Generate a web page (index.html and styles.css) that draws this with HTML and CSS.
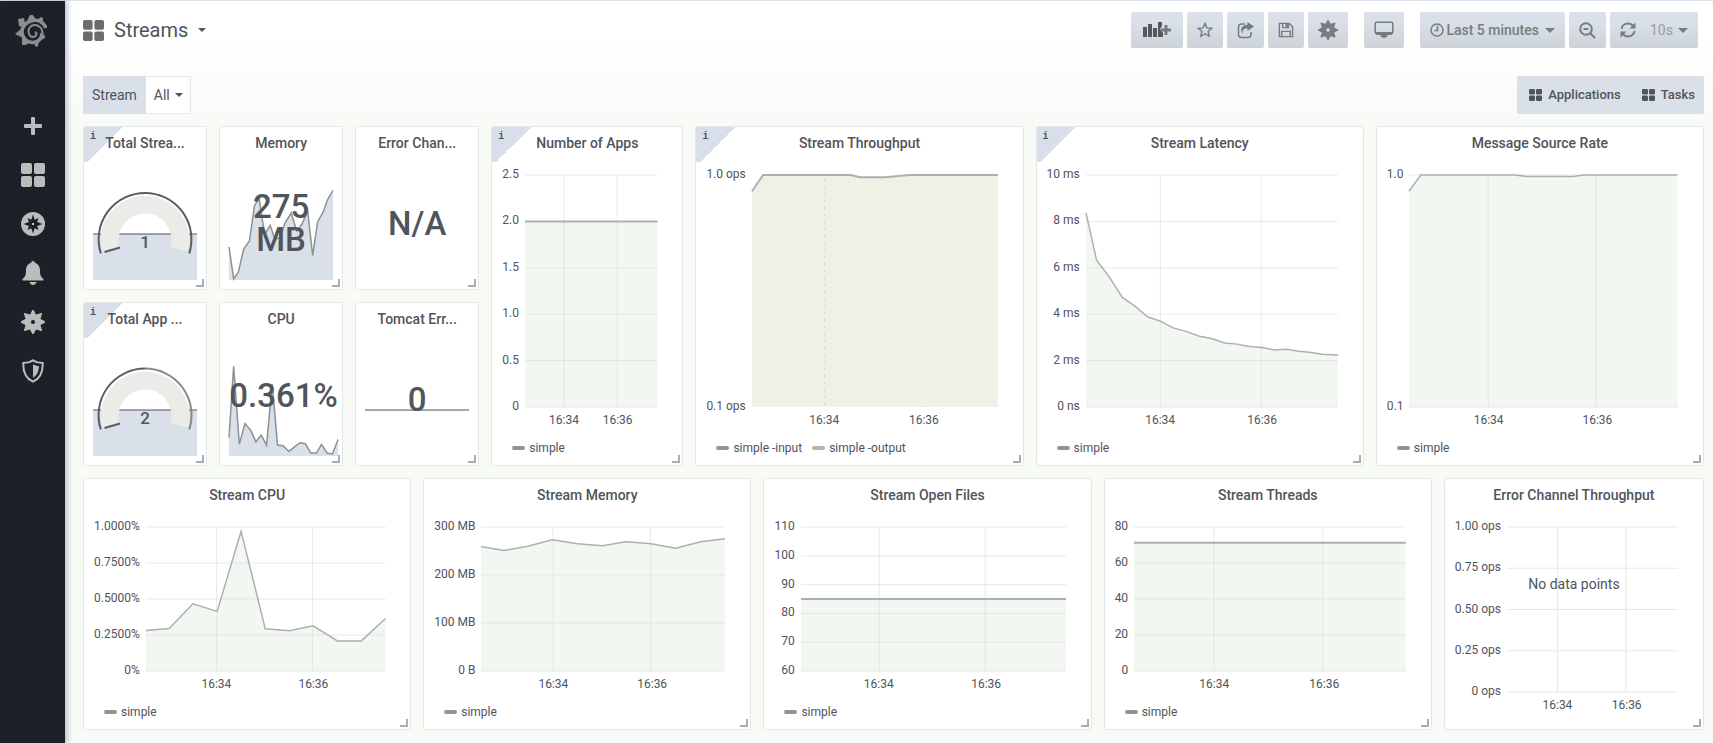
FILE: index.html
```html
<!DOCTYPE html>
<html lang="en">
<head>
<meta charset="utf-8">
<title>Streams</title>
<link rel="stylesheet" href="styles.css">
</head>
<body>
<svg class="defs" width="0" height="0" aria-hidden="true">
  <symbol id="i-grid" viewBox="0 0 24 24"><rect width="11" height="11" rx="2"/><rect x="13" width="11" height="11" rx="2"/><rect y="13" width="11" height="11" rx="2"/><rect x="13" y="13" width="11" height="11" rx="2"/></symbol>
  <symbol id="i-gear" viewBox="0 0 24 24"><path fill-rule="evenodd" d="M12 0l2.400 4.700 1 .4L20.500 3.500l-1.600 5.100.4 1L24 12l-4.700 2.400-.4 1 1.600 5.100-5.100-1.600-1 .4L12 24l-2.400-4.700-1-.4-5.100 1.600 1.600-5.100-.4-1L0 12l4.700-2.400.4-1L3.500 3.500l5.100 1.600 1-.4zM12 9.300a2.700 2.700 0 1 0 0 5.400 2.700 2.700 0 0 0 0-5.400z" stroke="currentColor" stroke-width="1.200" stroke-linejoin="round"/></symbol>
</svg>
<div class="app">
  <nav class="side" aria-label="Main">
    <a class="logo" href="#" aria-label="Home"><svg width="32" height="34" viewBox="0 0 32 34"><path d="M12 7l3-6h3l3 5zM3 5l6-1 1 5-4 4-2-1zM6 15l-6 5 6 3zM7 23v8h4l4-3zM18 28l3 5 2-1 1-6zM25 22l5-1v3l-4 2zM22 6l4-3 2 1v5z"/><path d="M31 14C29 8 23 5.500 18 6.500 11.500 7.500 7 12.500 7 18c0 6 5 10.500 11 10.500 5 0 9-4 9-9.500" fill="none" stroke="currentColor" stroke-width="3.500"/><path d="M27.500 19C27.500 14 24 11 19.500 11 16 11 13.500 14 13.500 17.500c0 3.500 2.500 6 5 5.500 3-.5 4-4 1.500-5" fill="none" stroke="currentColor" stroke-width="2"/></svg></a>
    <a href="#" aria-label="Create"><svg width="18" height="18" viewBox="0 0 18 18"><path d="M7 1q0-1 1-1h2q1 0 1 1v6h6q1 0 1 1v2q0 1-1 1h-6v6q0 1-1 1H8q-1 0-1-1v-6H1q-1 0-1-1V8q0-1 1-1h6z"/></svg></a>
    <a href="#" aria-label="Dashboards"><svg width="24" height="24"><use href="#i-grid"/></svg></a>
    <a href="#" aria-label="Explore"><svg width="24" height="24" viewBox="0 0 24 24"><circle cx="12" cy="12" r="12"/><path class="cut" d="M12 2.500l1.700 5.300 3.800-1.800-1.400 4 5.400 2-5.400 2 1.400 4-3.800-1.800L12 21.500l-1.700-5.300L6.500 18l1.400-4-5.400-2 5.400-2-1.400-4 3.800 1.800z"/><circle cx="12" cy="12" r="1.200"/></svg></a>
    <a href="#" aria-label="Alerting"><svg width="22" height="24" viewBox="0 0 22 24"><path d="M11 0c1.200 0 1.800.8 1.800 1.700C16.500 2.800 18 6 18 9.500c0 5 1 6.500 3.500 8.500v1.500H.5V18C3 16 4 14.500 4 9.500 4 6 5.500 2.800 9.200 1.700 9.200.8 9.800 0 11 0zM7.500 21h7c-.5 2-2 3-3.500 3s-3-1-3.500-3z"/></svg></a>
    <a href="#" aria-label="Configuration"><svg width="24" height="24"><use href="#i-gear"/></svg></a>
    <a href="#" aria-label="Server admin"><svg width="22" height="24" viewBox="0 0 22 24"><path d="M11 1.300c3 2 6 2.700 9.700 2.700C21 13 18 19.500 11 22.700 4 19.500 1 13 1.300 4 5 4 8 3.300 11 1.300z" fill="none" stroke="currentColor" stroke-width="2"/><path d="M11 5.200c2 1.200 3.800 1.700 6 1.900-.2 5.400-2 9.400-6 11.700z"/></svg></a>
  </nav>
  <main class="main">
    <header class="topbar">
      <button class="dash-title" type="button"><svg width="21" height="21"><use href="#i-grid"/></svg><span>Streams</span><i class="caret small"></i></button>
      <div class="tools">
        <div class="group">
          <button class="btn wide" type="button" aria-label="Add panel"><svg width="28" height="18" viewBox="0 0 28 18"><path class="dark" d="M0 6h4v10H0zM5 3h4v13H5zM10 7h4v9h-4zM15 1h4v4l-2 3 3 4v4h-5z"/><path d="M21.500 4h3v3.500H28v3h-3.500V14h-3v-3.500H18v-3h3.500z"/></svg></button>
          <button class="btn" type="button" aria-label="Mark as favorite"><svg width="16" height="16" viewBox="0 0 17 17"><path class="line" d="M8.500 1.500l2.100 4.700 5.100.5-3.900 3.400 1.200 5.100-4.500-2.700L4 15.200l1.200-5.100-3.900-3.400 5.100-.5z"/></svg></button>
          <button class="btn" type="button" aria-label="Share"><svg width="17" height="17" viewBox="0 0 17 17"><path class="line" d="M8 2H4.500Q1.500 2 1.500 5v7.500q0 3 3 3H11q3 0 3-3V10"/><path d="M10.500 0L17 4.500 10.500 9V6.500C7 6.300 5.500 8 5.500 12 2.500 7 5 2.800 10.500 2.700z"/></svg></button>
          <button class="btn" type="button" aria-label="Save"><svg width="16" height="16" viewBox="0 0 17 17"><path class="line" d="M1.500 1.500H12l3.500 3.500v10.500h-14zM4 15v-5h9v5M5 2v4h6V2"/><path d="M8 2h2.500v3.500H8z"/></svg></button>
          <button class="btn" type="button" aria-label="Settings"><svg width="20" height="20"><use href="#i-gear"/></svg></button>
        </div>
        <button class="btn" type="button" aria-label="Cycle view mode"><svg width="20" height="18" viewBox="0 0 20 18"><path class="line" d="M2.500 1.200h15q1.300 0 1.300 1.300v8.500q0 1.500-1.300 1.500h-15q-1.300 0-1.300-1.500V2.500q0-1.300 1.300-1.300z"/><path d="M1 11h18v1.500L17.500 14H13l.5 2H12l-2 1.500L8 16H6.500l.5-2H2.500L1 12.500z"/></svg></button>
        <div class="group">
          <button class="btn" type="button"><svg width="14" height="14" viewBox="0 0 14 14"><circle class="line" cx="7" cy="7" r="6"/><path class="line" d="M7.500 3v4.500H4.500"/></svg><span class="time">Last 5 minutes</span><i class="caret"></i></button>
          <button class="btn" type="button" aria-label="Zoom out"><svg width="17" height="17" viewBox="0 0 17 17"><circle class="line bold" cx="7" cy="7" r="5.800"/><path class="line bold" d="M11.300 11.300L16 16M4.500 7h5"/></svg></button>
          <div class="btn refresh">
            <button type="button" aria-label="Refresh"><svg width="16" height="16" viewBox="0 0 16 16"><path class="line bold" d="M1.500 7C2 3.500 5 1.500 8 1.500c2.200 0 4 1 5.200 2.600M14.500 9c-.5 3.500-3.500 5.500-6.500 5.500-2.200 0-4-1-5.200-2.600"/><path d="M15.500.5v6h-6zM.5 15.500v-6h6z"/></svg></button>
            <label class="pick"><select aria-label="Refresh interval"><option>10s</option></select><i class="caret"></i></label>
          </div>
        </div>
      </div>
    </header>
    <div class="submenu">
      <div class="variable"><label for="stream">Stream</label><span class="pick"><select id="stream"><option>All</option></select><i class="caret small"></i></span></div>
      <div class="links"><a href="#"><svg width="13" height="12" viewBox="0 0 24 24" preserveAspectRatio="none"><use href="#i-grid"/></svg>Applications</a><a href="#"><svg width="13" height="12" viewBox="0 0 24 24" preserveAspectRatio="none"><use href="#i-grid"/></svg>Tasks</a></div>
    </div>
    <div class="board">
      <section class="panel w2 h4 info"><h2>Total Strea...</h2>
        <div class="stat"><svg class="gauge" viewBox="0 0 104 90"><path class="area" d="M0 44h104v46H0z"/><path class="spark" d="M0 44h104"/><path class="band" d="M17.700 59.500A35.500 35.500 0 1 1 86.300 59.500"/><path class="hole" d="M27 44a25.500 25.500 0 0 1 50 0z"/><path class="spark" d="M27 44h50"/><path class="rim" d="M7.800 63.400A46.400 46.400 0 1 1 96.200 63.400M11.500 62L27 57.500"/><text x="52" y="58">1</text></svg></div></section>
      <section class="panel w2 h4"><h2>Memory</h2>
        <div class="stat"><svg viewBox="460 227 311 270" preserveAspectRatio="none"><path class="area" d="M460 398L474 494 488 473 504 404 521 380 536 275 550 250 557 300 567 360 583 333 597 375 612 370 628 325 646 296 662 350 678 330 695 290 710 423 725 322 740 296 755 255 771 228V497H460z"/><path class="spark" d="M460 398L474 494 488 473 504 404 521 380 536 275 550 250 557 300 567 360 583 333 597 375 612 370 628 325 646 296 662 350 678 330 695 290 710 423 725 322 740 296 755 255 771 228"/></svg><strong>275 MB</strong></div></section>
      <section class="panel w2 h4"><h2>Error Chan...</h2><div class="stat"><strong>N/A</strong></div></section>
      <section class="panel w3 h8 info"><h2>Number of Apps</h2>
        <div class="chart"><div class="y"><span>2.5</span><span>2.0</span><span>1.5</span><span>1.0</span><span>0.5</span><span>0</span></div>
          <svg class="plot" viewBox="0 0 100 100" preserveAspectRatio="none"><path class="fill" d="M0 20H100V100H0z"/><path class="grid" d="M0 0H100M0 20H100M0 40H100M0 60H100M0 80H100M0 100H100M29.500 0V100M69.500 0V100"/><path class="series thick" d="M0 20H100"/></svg>
          <div class="x"><span>16:34</span><span>16:36</span></div></div>
        <div class="legend"><span>simple</span></div></section>
      <section class="panel w5 h8 info"><h2>Stream Throughput</h2>
        <div class="chart"><div class="y"><span>1.0 ops</span><span>0.1 ops</span></div>
          <svg class="plot" viewBox="0 0 100 100" preserveAspectRatio="none"><path class="fill warm" d="M0 7L4.500 0H40.200L44 1H54L64 0H100V100H0z"/><path class="dots" d="M29.500 2V100"/><path class="dots sparse" d="M69.500 3V100"/><path class="series thick" d="M0 7L4.500 0H40.200L44 1H54L64 0H100"/></svg>
          <div class="x"><span>16:34</span><span>16:36</span></div></div>
        <div class="legend"><span>simple -input</span><span class="pale">simple -output</span></div></section>
      <section class="panel w5 h8 info"><h2>Stream Latency</h2>
        <div class="chart"><div class="y"><span>10 ms</span><span>8 ms</span><span>6 ms</span><span>4 ms</span><span>2 ms</span><span>0 ns</span></div>
          <svg class="plot" viewBox="0 0 100 100" preserveAspectRatio="none"><path class="fill" d="M0 16.300L4.200 36.700 9.200 43.900 14.500 52.900 19.400 56.500 24.600 61.200 29.300 62.900 34.600 65.900 39.300 67.300 45 69.500 49.400 70.400 55 72.400 59.900 72.900 64.200 73.800 69.800 74.400 74.700 75.400 79.600 75.100 84.300 76 88.700 76.400 93.900 77.300 100 77.600V100H0z"/><path class="grid" d="M0 0H100M0 20H100M0 40H100M0 60H100M0 80H100M0 100H100M29.500 0V100M69.500 0V100"/><path class="series" d="M0 16.300L4.200 36.700 9.200 43.900 14.500 52.900 19.400 56.500 24.600 61.200 29.300 62.900 34.600 65.900 39.300 67.300 45 69.500 49.400 70.400 55 72.400 59.900 72.900 64.200 73.800 69.800 74.400 74.700 75.400 79.600 75.100 84.300 76 88.700 76.400 93.900 77.300 100 77.600"/></svg>
          <div class="x"><span>16:34</span><span>16:36</span></div></div>
        <div class="legend"><span>simple</span></div></section>
      <section class="panel w5 h8"><h2>Message Source Rate</h2>
        <div class="chart"><div class="y"><span>1.0</span><span>0.1</span></div>
          <svg class="plot" viewBox="0 0 100 100" preserveAspectRatio="none"><path class="fill" d="M0 7L4.400 0H39.500L43.600.6H61L65 0H100V100H0z"/><path class="grid" d="M0 0H100M0 100H100M29.500 0V100M69.500 0V100"/><path class="series" d="M0 7L4.400 0H39.500L43.600.6H61L65 0H100"/></svg>
          <div class="x"><span>16:34</span><span>16:36</span></div></div>
        <div class="legend"><span>simple</span></div></section>
      <section class="panel w2 h4 info"><h2>Total App ...</h2>
        <div class="stat"><svg class="gauge" viewBox="0 0 104 90"><path class="area" d="M0 44h104v46H0z"/><path class="spark" d="M0 44h104"/><path class="band" d="M17.700 59.500A35.500 35.500 0 1 1 86.300 59.500"/><path class="hole" d="M27 44a25.500 25.500 0 0 1 50 0z"/><path class="spark" d="M27 44h50"/><path class="rim soft" d="M52 2.600A46.400 46.400 0 0 1 96.200 63.400"/><path class="rim" d="M7.800 63.400A46.400 46.400 0 0 1 52 2.600M11.500 62L27 57.500"/><text x="52" y="58">2</text></svg></div></section>
      <section class="panel w2 h4"><h2>CPU</h2>
        <div class="stat long"><svg viewBox="460 754 328 272" preserveAspectRatio="none"><path class="area" d="M460 970L474 755 491 990 508 928 525 948 541 983 557 963 573 993 590 808 606 993 622 995 640 1012 655 1000 673 986 690 989 706 1017 723 1017 738 991 755 1017 771 1020 788 976V1026H460z"/><path class="spark" d="M460 970L474 755 491 990 508 928 525 948 541 983 557 963 573 993 590 808 606 993 622 995 640 1012 655 1000 673 986 690 989 706 1017 723 1017 738 991 755 1017 771 1020 788 976"/></svg><strong>0.361%</strong></div></section>
      <section class="panel w2 h4"><h2>Tomcat Err...</h2><div class="stat"><svg viewBox="0 0 104 90" preserveAspectRatio="none"><path class="spark flat" d="M0 44h104"/></svg><strong>0</strong></div></section>
      <section class="panel w5 h6"><h2>Stream CPU</h2>
        <div class="chart"><div class="y"><span>1.0000%</span><span>0.7500%</span><span>0.5000%</span><span>0.2500%</span><span>0%</span></div>
          <svg class="plot" viewBox="0 0 100 100" preserveAspectRatio="none"><path class="fill" d="M0 71.900L9.700 70.500 19.600 53.300 29.700 58.600 39.700 3 49.800 70.700 59.900 72.100 69.800 68.600 79.900 79.100H89.900L100 63.500V100H0z"/><path class="grid" d="M0 0H100M0 25H100M0 50H100M0 75H100M0 100H100M29.500 0V100M69.500 0V100"/><path class="series" d="M0 71.900L9.700 70.500 19.600 53.300 29.700 58.600 39.700 3 49.800 70.700 59.900 72.100 69.800 68.600 79.900 79.100H89.900L100 63.500"/></svg>
          <div class="x"><span>16:34</span><span>16:36</span></div></div>
        <div class="legend"><span>simple</span></div></section>
      <section class="panel w5 h6"><h2>Stream Memory</h2>
        <div class="chart"><div class="y"><span>300 MB</span><span>200 MB</span><span>100 MB</span><span>0 B</span></div>
          <svg class="plot" viewBox="0 0 100 100" preserveAspectRatio="none"><path class="fill" d="M0 13.500L9.400 16.300 18.800 13.500 29.200 8.800 39.500 11.600 49.800 13 59.400 10.200 69.700 11.600 79.800 14.700 90 10.200 100 8.100V100H0z"/><path class="grid" d="M0 0H100M0 33.300H100M0 66.700H100M0 100H100M29.500 0V100M69.500 0V100"/><path class="series" d="M0 13.500L9.400 16.300 18.800 13.500 29.200 8.800 39.500 11.600 49.800 13 59.400 10.200 69.700 11.600 79.800 14.700 90 10.200 100 8.100"/></svg>
          <div class="x"><span>16:34</span><span>16:36</span></div></div>
        <div class="legend"><span>simple</span></div></section>
      <section class="panel w5 h6"><h2>Stream Open Files</h2>
        <div class="chart"><div class="y"><span>110</span><span>100</span><span>90</span><span>80</span><span>70</span><span>60</span></div>
          <svg class="plot" viewBox="0 0 100 100" preserveAspectRatio="none"><path class="fill" d="M0 50H100V100H0z"/><path class="grid" d="M0 0H100M0 20H100M0 40H100M0 60H100M0 80H100M0 100H100M29.500 0V100M69.500 0V100"/><path class="series thick" d="M0 50H100"/></svg>
          <div class="x"><span>16:34</span><span>16:36</span></div></div>
        <div class="legend"><span>simple</span></div></section>
      <section class="panel w5 h6"><h2>Stream Threads</h2>
        <div class="chart"><div class="y"><span>80</span><span>60</span><span>40</span><span>20</span><span>0</span></div>
          <svg class="plot" viewBox="0 0 100 100" preserveAspectRatio="none"><path class="fill" d="M0 11H100V100H0z"/><path class="grid" d="M0 0H100M0 25H100M0 50H100M0 75H100M0 100H100M29.500 0V100M69.500 0V100"/><path class="series thick" d="M0 11H100"/></svg>
          <div class="x"><span>16:34</span><span>16:36</span></div></div>
        <div class="legend"><span>simple</span></div></section>
      <section class="panel w4 h6 no-legend"><h2>Error Channel Throughput</h2>
        <div class="chart"><div class="y"><span>1.00 ops</span><span>0.75 ops</span><span>0.50 ops</span><span>0.25 ops</span><span>0 ops</span></div>
          <svg class="plot" viewBox="0 0 100 100" preserveAspectRatio="none"><path class="grid" d="M0 0H100M0 25H100M0 50H100M0 75H100M0 100H100M29.500 0V100M69.500 0V100"/></svg>
          <div class="x"><span>16:34</span><span>16:36</span></div></div>
        <p class="empty">No data points</p></section>
    </div>
  </main>
</div>
</body>
</html>
```
FILE: styles.css
```css
* { box-sizing: border-box; }
body {
  margin: 0;
  font: 14px/16px Roboto, "Liberation Sans", sans-serif;
  color: #50545b;
  background: linear-gradient(#ffffff 40px, #f8faf6 130px) #f8faf6;
}
a { color: inherit; text-decoration: none; }
button, select { font: inherit; color: inherit; border: 0; background: none; padding: 0; }
svg { display: block; fill: currentColor; flex: none; }
.defs { position: absolute; }
.app { display: flex; min-height: 100vh; border-top: 1px solid #d9e0ea; }

.side {
  flex: none;
  width: 65px;
  display: flex;
  flex-direction: column;
  align-items: center;
  gap: 25px;
  padding-top: 13px;
  color: #b9bdbb;
  background: #1e2029;
  box-shadow: 1px 0 6px 1px #aeb8c6;
}
.side a { display: grid; place-items: center; width: 24px; height: 24px; }
.side .logo { width: 36px; height: 34px; margin: 0 4px 41px 0; color: #8b8e90; }
.cut { fill: #1e2029; }

.main { flex: 1; min-width: 0; padding: 11px 9px 12px 18px; }
.topbar { display: flex; justify-content: space-between; padding-right: 6px; }
.dash-title { display: flex; align-items: center; gap: 10px; font-size: 20px; line-height: 24px; }
.dash-title svg { color: #6a6d70; }
.caret { flex: none; border: 5px solid transparent; border-top-color: currentColor; border-bottom: 0; }
.caret.small { border-width: 4px 4px 0; }
.tools { display: flex; gap: 16px; }
.group { display: flex; gap: 4px; }
.btn {
  display: flex;
  align-items: center;
  justify-content: center;
  gap: 2px;
  height: 36px;
  padding: 0 10px;
  border-radius: 2px;
  color: #777c7e;
  background: linear-gradient(#dae0e8 30%, #ccd3d8);
}
.btn.wide { padding: 0 12px; }
.time { margin-right: 4px; font-weight: 500; }
.dark { fill: #55585c; }
.line { fill: none; stroke: currentColor; stroke-width: 1.500; }
.line.bold { stroke-width: 2; }
.refresh { gap: 14px; }
.pick { display: flex; align-items: center; gap: 5px; }
.pick select { appearance: none; outline: 0; }
.refresh .pick { color: #999d9d; }
.refresh .caret { color: #777c7e; }

.submenu { display: flex; justify-content: space-between; padding: 28px 0 12px; }
.variable, .links { display: flex; height: 38px; }
.variable label { padding: 11px 9px; background: #dae0ea; }
.variable .pick { padding: 0 7px 0 8px; background: #fff; border: 1px solid #e4e9e8; border-left: 0; }
.links { background: #dae0e8; border-radius: 2px; font-size: 13px; font-weight: 500; }
.links a { display: flex; align-items: center; gap: 6px; padding: 0 9px 0 12px; }

.board { display: grid; grid-template-columns: repeat(24, minmax(0, 1fr)); grid-auto-rows: 32px; gap: 12px; }
.w2 { grid-column: span 2; }
.w3 { grid-column: span 3; }
.w4 { grid-column: span 4; }
.w5 { grid-column: span 5; }
.h4 { grid-row: span 4; }
.h6 { grid-row: span 6; }
.h8 { grid-row: span 8; }
.panel {
  position: relative;
  display: flex;
  flex-direction: column;
  padding-bottom: 9px;
  background: #fff;
  border: 1px solid #e2e7e8;
  border-radius: 3px;
}
.panel::after {
  content: "";
  position: absolute;
  right: 2px;
  bottom: 2px;
  width: 6px;
  height: 6px;
  border: solid #a9aeb1;
  border-width: 0 2px 2px 0;
}
.info::before {
  content: "i";
  position: absolute;
  top: 0;
  left: 0;
  width: 31px;
  height: 31px;
  padding: 2px 6px;
  font: bold 10px/16px "Liberation Mono", monospace;
  background: linear-gradient(135deg, #d9dfe9 50%, transparent 50%);
}
.panel h2 { position: relative; margin: 0; padding: 8px 0; font-size: 14px; line-height: 16px; font-weight: 500; text-align: center; white-space: nowrap; }

.chart { flex: 1; min-height: 0; display: grid; grid-template: minmax(0, 1fr) auto / auto minmax(0, 1fr); column-gap: 6px; padding: 16px 25px 0 10px; font-size: 12px; }
.y { display: flex; flex-direction: column; justify-content: space-between; margin: -9px 0 -7px; text-align: right; }
.plot { width: 100%; height: 100%; overflow: visible; }
.plot path { vector-effect: non-scaling-stroke; fill: none; }
.plot .fill { fill: #f3f7f2; }
.plot .warm { fill: #f1f0e4; }
.grid { stroke: #d9dbd8; stroke-opacity: .6; }
.dots { stroke: #bdbdb5; stroke-dasharray: 1 6; }
.dots.sparse { stroke-dasharray: 1 13; stroke-opacity: .5; }
.series { stroke: #abb1af; stroke-width: 1.500; }
.series.thick { stroke-width: 2; }
.x { grid-column: 2; display: grid; grid-template-columns: 59fr 22fr 19fr; margin-top: 5px; }
.x span { display: flex; justify-content: center; min-width: 0; }
.legend { display: flex; gap: 10px; padding: 12px 20px 0; font-size: 12px; }
.legend span { display: flex; align-items: center; gap: 4px; }
.legend span::before { content: ""; width: 13px; height: 4px; border-radius: 2px; background: #919596; }
.legend .pale::before { background: #b4b5a6; }
.no-legend { padding-bottom: 16px; }
.empty { position: absolute; top: 97px; left: 0; right: 0; margin: 0; text-align: center; }

.stat { flex: 1; display: grid; grid-template: 1fr / minmax(0, 1fr); align-items: end; padding: 0 9px; }
.stat svg { grid-area: 1 / 1; width: 100%; height: 90px; overflow: visible; }
.stat.long { padding: 0 4px 0 9px; }
.stat strong { grid-area: 1 / 1; align-self: center; text-align: center; font-size: 33px; line-height: 33px; font-weight: 500; position: relative; }
.stat:has(strong) { padding-top: 7px; }
.area { fill: #dae0ea; }
.spark { fill: none; stroke: #8c9192; stroke-width: 1.500; vector-effect: non-scaling-stroke; }
.spark.flat { stroke-width: 2; stroke: #a4aaa8; }
.band { fill: none; stroke: #ebece8; stroke-width: 18; }
.hole { fill: #fff; }
.rim { fill: none; stroke: #5a5e62; stroke-width: 2; }
.rim.soft { stroke: #85898b; }
.gauge text { font-size: 17px; font-weight: 500; text-anchor: middle; }
```
